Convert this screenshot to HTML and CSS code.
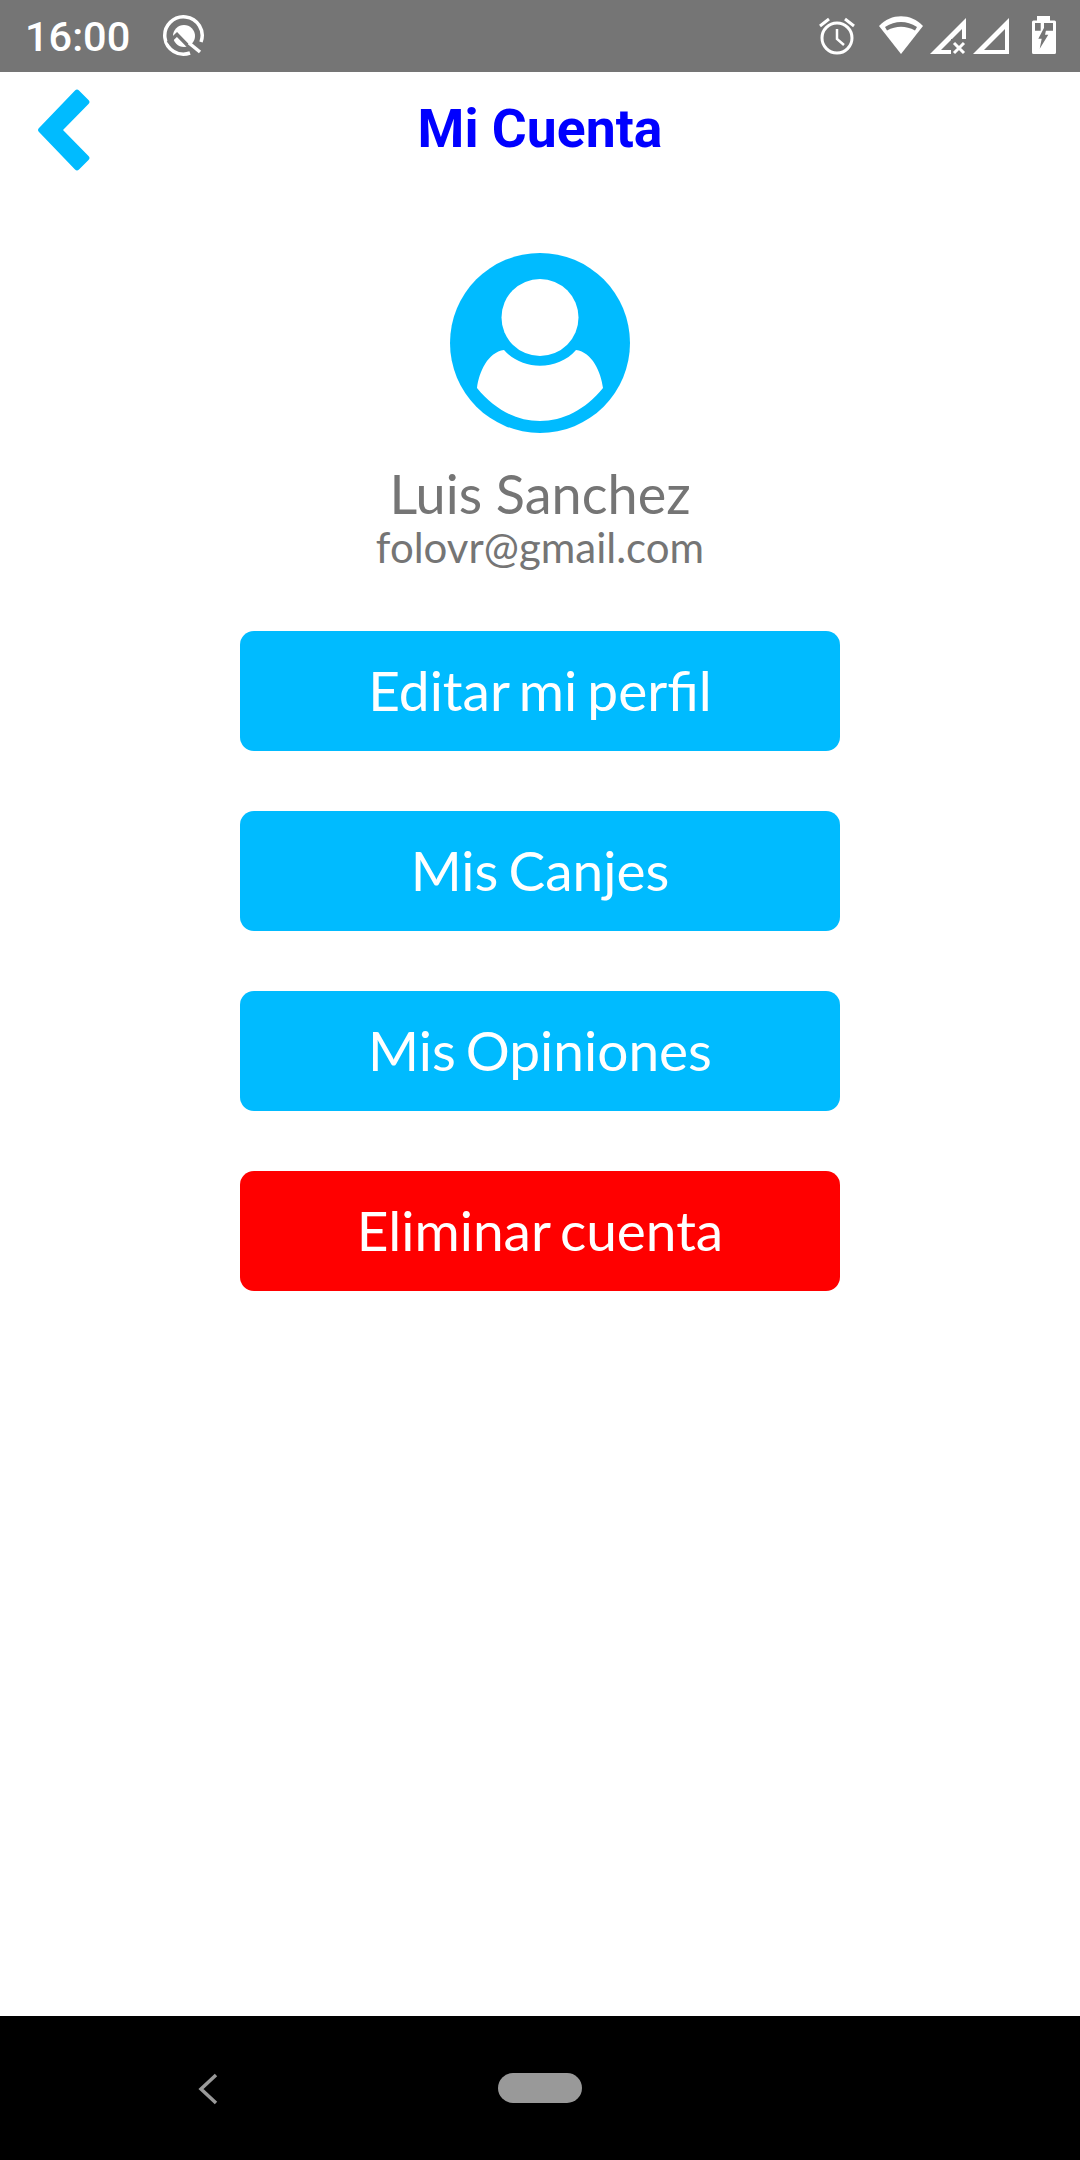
FILE: index.html
```html
<!DOCTYPE html>
<html lang="es">
<head>
    <meta charset="UTF-8">
    <meta name="viewport" content="width=device-width, initial-scale=1.0">
    <title>Mi Cuenta</title>
    <link rel="stylesheet" href="styles.css">
</head>
<body>
    <div class="status-bar">
        <span class="clock">16:00</span>
        <svg class="q-logo" width="42" height="42" viewBox="0 0 42 42">
            <path d="M27 38A18.700 18.700 0 1 1 38 27" fill="none" stroke="#fff" stroke-width="3.500"/>
            <circle cx="21" cy="21" r="11" fill="#fff"/>
            <path d="M5 28L14 19.500L31 37" fill="none" stroke="#757575" stroke-width="3.500"/>
            <path d="M26 28L37 37" stroke="#fff" stroke-width="3.500"/>
        </svg>
        <div class="status-icons">
            <svg class="alarm" width="36" height="40" viewBox="0 0 36 40">
                <circle cx="18" cy="22" r="15" fill="none" stroke="#fff" stroke-width="3"/>
                <path d="M18 13V23L25 29" fill="none" stroke="#fff" stroke-width="2.500"/>
                <path d="M1 10L10 3M35 10L26 3" stroke="#fff" stroke-width="3"/>
            </svg>
            <svg class="wifi" width="46" height="38" viewBox="0 0 46 38">
                <path d="M23 38L1 10C13 -3 33 -3 45 10Z" fill="#fff"/>
                <path d="M7 11Q23 1 39 11L37 14.500Q23 7 9 14.500Z" fill="#757575"/>
            </svg>
            <svg class="signal" width="38" height="38" viewBox="0 0 38 38">
                <path d="M1 37L37 1V37Z M12 33H33V12Z" fill="#fff" fill-rule="evenodd"/>
                <rect x="22" y="22" width="16" height="16" fill="#757575"/>
                <path d="M25 26L35 36M35 26L25 36" stroke="#fff" stroke-width="3"/>
            </svg>
            <svg class="signal" width="38" height="38" viewBox="0 0 38 38">
                <path d="M1 37L37 1V37Z M12 33H33V12Z" fill="#fff" fill-rule="evenodd"/>
            </svg>
            <svg class="battery" width="24" height="38" viewBox="0 0 24 38">
                <path d="M5 0H18V4.500H22.500Q24 4.500 24 6V36.500Q24 38 22.500 38H1.500Q0 38 0 36.500V6Q0 4.500 1.500 4.500H5Z" fill="#fff"/>
                <path d="M3 7H8.700V14.700H3ZM12 7H21V14.700H12Z" fill="#757575"/>
                <path d="M13 10L6.300 22.700H9.700L7.700 32.700L16.300 18.700H13L15 10Z" fill="#757575"/>
            </svg>
        </div>
    </div>

    <main class="screen">
        <header class="top-bar">
            <svg class="back" width="52" height="82" viewBox="0 0 52 82">
                <path d="M37 1.500Q39 -0.500 41 1.500L50.500 11Q52.500 13 50.500 15L25 41L50.500 67Q52.500 69 50.500 71L41 80.500Q39 82.500 37 80.500L1 43Q-1 41 1 39Z" fill="#00bbff"/>
            </svg>
            <h1 class="title">Mi Cuenta</h1>
        </header>

        <section class="profile">
            <svg class="avatar" width="180" height="180" viewBox="0 0 180 180">
                <circle cx="90" cy="90" r="90" fill="#00bbff"/>
                <circle cx="90" cy="64.500" r="38.500" fill="#fff"/>
                <path d="M54 97C72 118 108 118 126 97C142 99 151 119 153 135C135 157 113 168 90 168C67 168 45 157 27 135C29 119 38 99 54 97Z" fill="#fff"/>
            </svg>
            <div class="name">Luis Sanchez</div>
            <div class="email">folovr@gmail.com</div>
        </section>

        <nav class="actions">
            <a class="btn">Editar mi perfil</a>
            <a class="btn">Mis Canjes</a>
            <a class="btn">Mis Opiniones</a>
            <a class="btn btn-danger">Eliminar cuenta</a>
        </nav>
    </main>

    <div class="nav-bar">
        <svg class="nav-back" width="20" height="32" viewBox="0 0 20 32">
            <path d="M18 2L3 16L18 30" fill="none" stroke="#999" stroke-width="3.500"/>
        </svg>
        <div class="nav-home"></div>
    </div>
</body>
</html>
```

FILE: styles.css
```css
html, body {
    margin: 0;
    padding: 0;
}
body {
    width: 1080px;
    height: 2160px;
    display: flex;
    flex-direction: column;
    background-color: white;
    font-family: Lato, sans-serif;
}
.status-bar {
    height: 72px;
    display: flex;
    align-items: center;
    padding: 0 24px 0 25px;
    background-color: #757575;
    color: white;
}
.clock {
    font-family: Roboto, sans-serif;
    font-size: 41.5px;
    font-weight: 500;
}
.q-logo {
    margin-left: 33px;
}
.status-icons {
    margin-left: auto;
    display: flex;
    align-items: center;
}
.wifi {
    margin-left: 23px;
    margin-bottom: 3px;
}
.signal {
    margin-left: 5px;
}
.battery {
    margin-left: 22px;
    margin-bottom: 2px;
}
.screen {
    flex: 1;
    display: flex;
    flex-direction: column;
    align-items: center;
}
.top-bar {
    width: 100%;
    height: 113px;
    padding-bottom: 3px;
    display: flex;
    align-items: center;
    justify-content: center;
    position: relative;
}
.back {
    position: absolute;
    left: 38px;
    top: 17px;
}
.title {
    margin: 0;
    font-family: Roboto, sans-serif;
    font-size: 53.5px;
    font-weight: 700;
    color: #0000ff;
}
.profile {
    margin-top: 65px;
    display: flex;
    flex-direction: column;
    align-items: center;
    color: #757575;
}
.avatar {
    display: block;
}
.name {
    margin-top: 30px;
    font-size: 54px;
    line-height: 62px;
}
.email {
    font-size: 42px;
    line-height: 44px;
}
.actions {
    margin-top: 62px;
    display: flex;
    flex-direction: column;
    gap: 60px;
}
.btn {
    width: 600px;
    height: 120px;
    box-sizing: border-box;
    padding-bottom: 2px;
    display: flex;
    align-items: center;
    justify-content: center;
    border-radius: 14px;
    background-color: #00bbff;
    color: white;
    font-size: 55px;
    word-spacing: -4px;
}
.btn-danger {
    background-color: #ff0000;
}
.nav-bar {
    height: 144px;
    position: relative;
    display: flex;
    align-items: center;
    justify-content: center;
    background-color: black;
}
.nav-back {
    position: absolute;
    left: 198px;
    top: 57px;
}
.nav-home {
    width: 84px;
    height: 30px;
    border-radius: 15px;
    background-color: #999;
}
```
